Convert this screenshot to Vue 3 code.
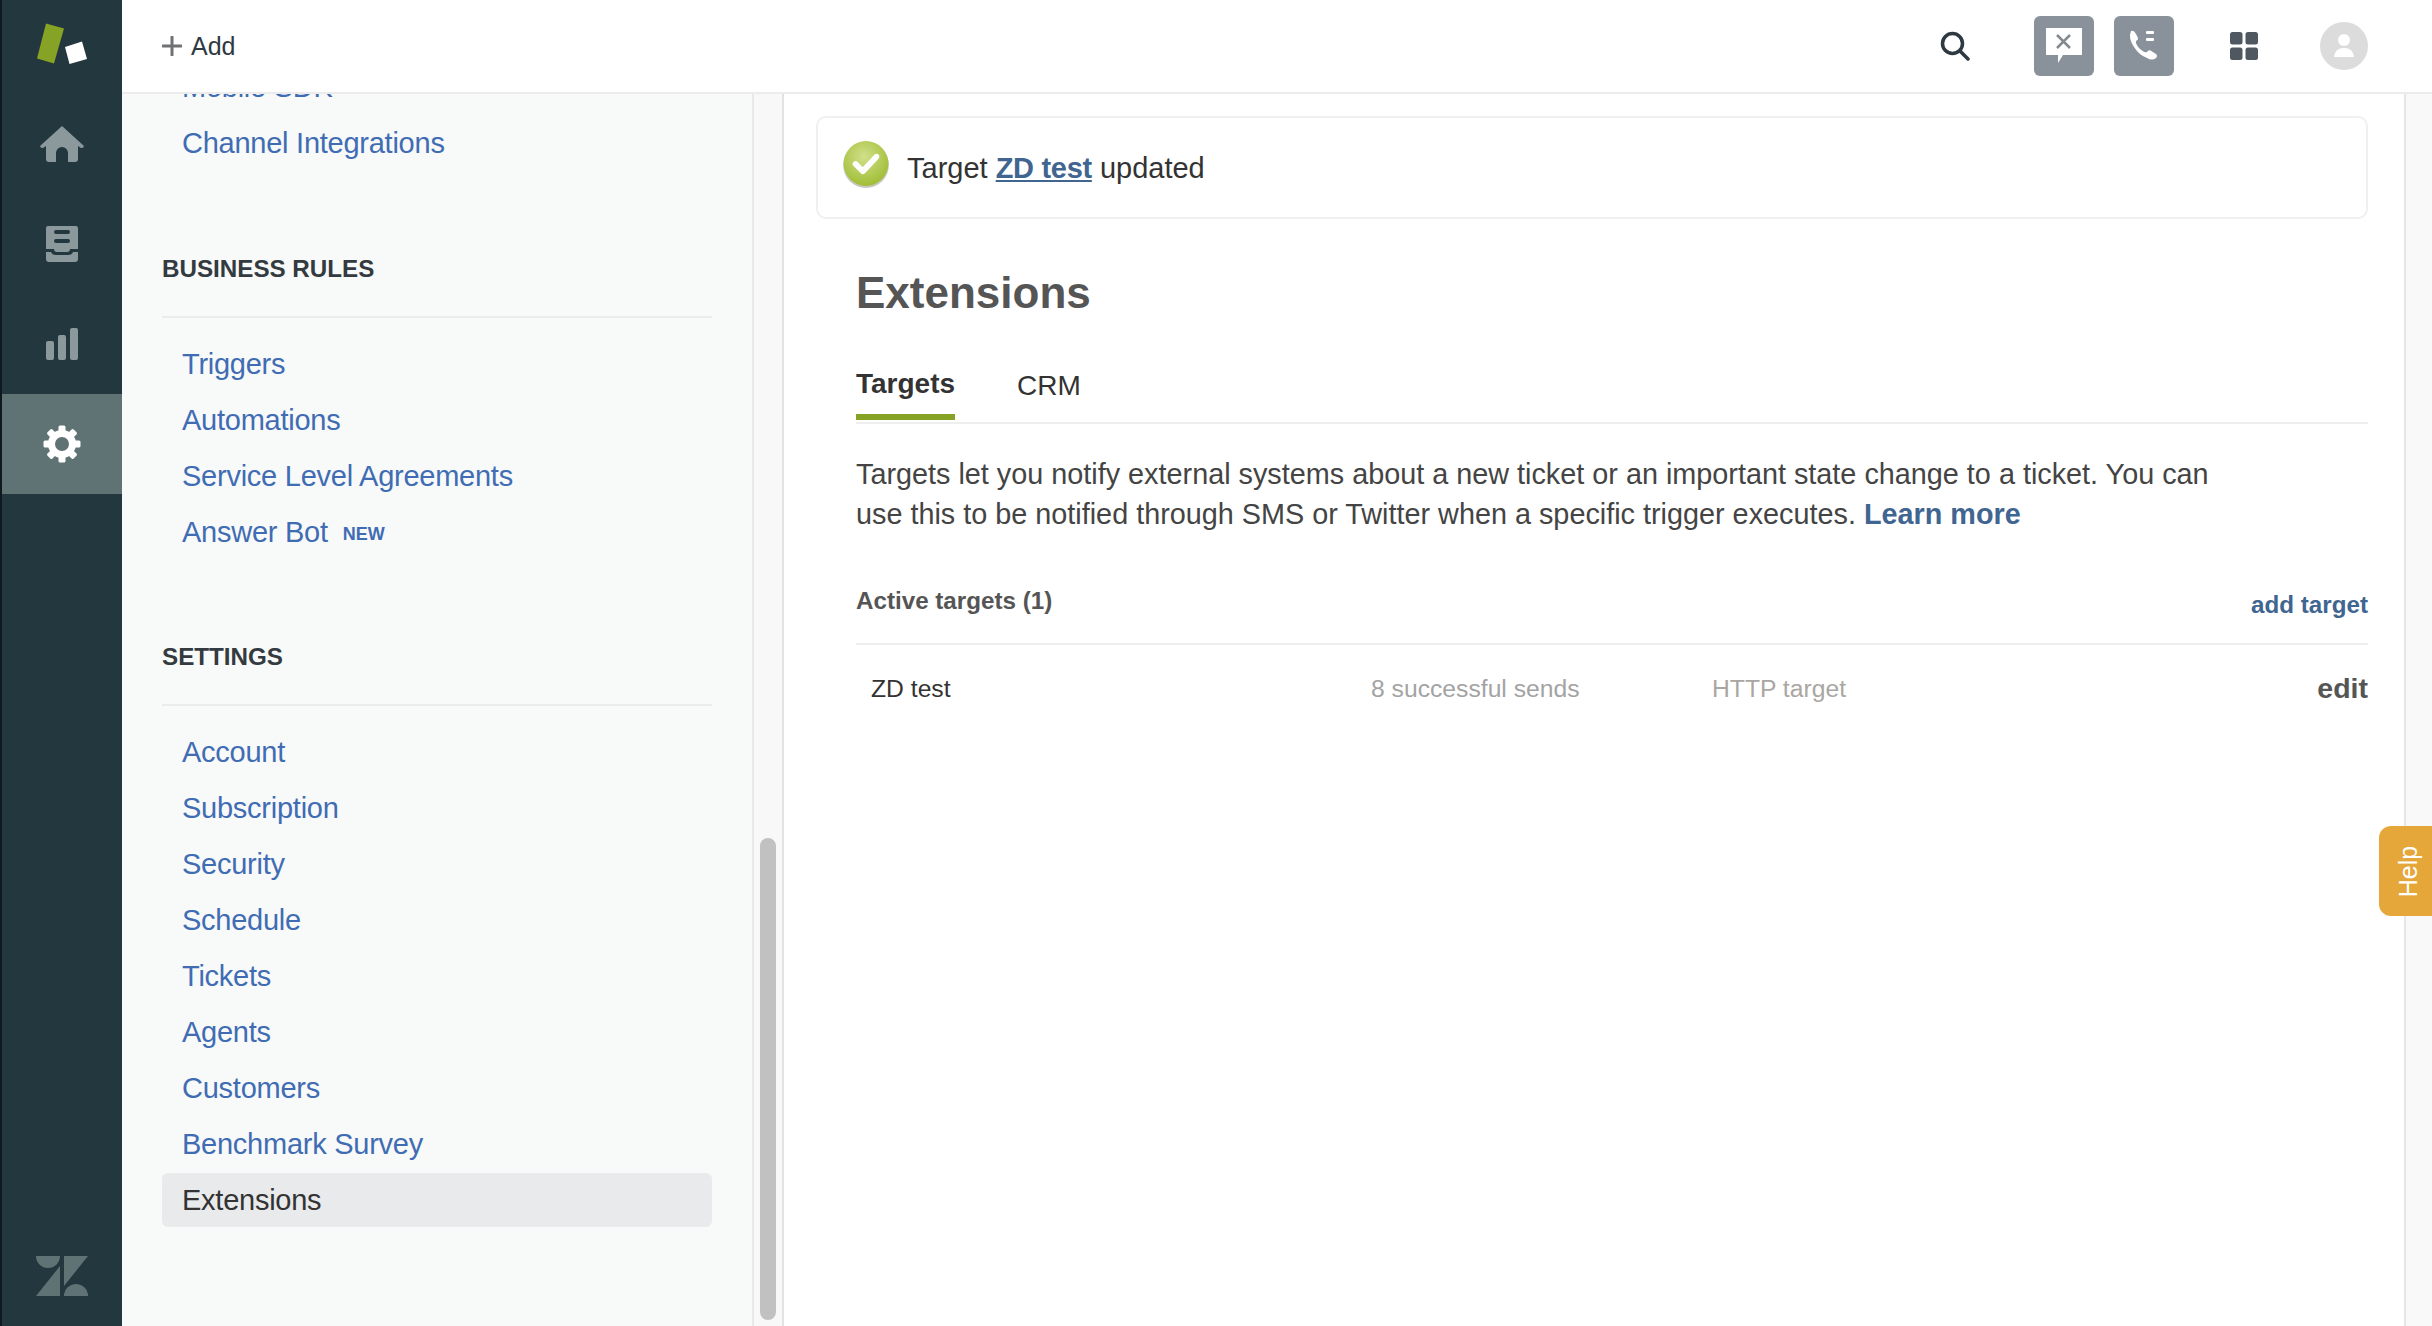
<template>
  <div class="page">
    <!-- left rail -->
    <nav class="rail">
      <div class="rail-logo">
        <svg width="122" height="92" viewBox="0 0 122 92">
          <polygon points="46,23.5 64,28.5 54,63.5 37,58.5" fill="#86a325" />
          <polygon points="65,47 82,41.5 87,59 69.5,64" fill="#ffffff" />
        </svg>
      </div>
      <div class="rail-item">
        <svg width="46" height="38" viewBox="0 0 46 38">
          <path fill="#8b989c" d="M23 1 L45 21 Q44.500 23.500 42 23 L39 21 V34 Q39 37 36 37 H29 V28 A6 6 0 0 0 17 28 V37 H10 Q7 37 7 34 V21 L4 23 Q1.500 23.500 1 21 Z" />
        </svg>
      </div>
      <div class="rail-item">
        <svg width="34" height="38" viewBox="0 0 34 38">
          <path fill="#8b989c" d="M3 1 H31 Q33 1 33 3 V24 H25 Q25 27 22 27 H12 Q9 27 9 24 H1 V3 Q1 1 3 1 Z" />
          <rect x="9" y="5" width="16" height="4" rx="2" fill="#23373e" />
          <rect x="9" y="14" width="16" height="4" rx="2" fill="#23373e" />
          <path fill="#8b989c" d="M1 27 H6 Q7 30 11 30 H23 Q27 30 28 27 H33 V34 Q33 37 30 37 H4 Q1 37 1 34 Z" />
        </svg>
      </div>
      <div class="rail-item">
        <svg width="34" height="34" viewBox="0 0 34 34">
          <rect x="1" y="14" width="8" height="19" rx="2" fill="#8b989c" />
          <rect x="13" y="8" width="8" height="25" rx="2" fill="#8b989c" />
          <rect x="25" y="1" width="8" height="32" rx="2" fill="#8b989c" />
        </svg>
      </div>
      <div class="rail-item active">
        <svg width="38" height="38" viewBox="0 0 38 38">
          <rect v-for="a in gearAngles" :key="a" x="15.500" y="0.500" width="7" height="8" rx="1.500" fill="#fff" :transform="`rotate(${a} 19 19)`" />
          <circle cx="19" cy="19" r="10.500" fill="none" stroke="#fff" stroke-width="7" />
        </svg>
      </div>
      <div class="rail-bottom">
        <svg width="52" height="40" viewBox="0 0 52 40">
          <g fill="#5f7274">
            <path d="M0 0 H24 A12 12 0 0 1 0 0 Z" />
            <path d="M0 40 L24 10 V40 Z" />
            <path d="M28 0 H52 L28 30 Z" />
            <path d="M28 40 A12 12 0 0 1 52 40 Z" />
          </g>
        </svg>
      </div>
    </nav>

    <div class="body">
      <!-- top bar -->
      <header class="topbar">
        <div class="add">
          <svg width="20" height="20" viewBox="0 0 20 20">
            <path d="M10 1 V19 M1 10 H19" stroke="#6f7173" stroke-width="3" stroke-linecap="round" />
          </svg>
          <span>Add</span>
        </div>
        <div class="top-icons">
          <svg class="search" width="30" height="30" viewBox="0 0 30 30">
            <circle cx="12.500" cy="12.500" r="10" fill="none" stroke="#2f3941" stroke-width="3.500" />
            <path d="M20 20 L28 28" stroke="#2f3941" stroke-width="3.500" stroke-linecap="round" />
          </svg>
          <div class="square">
            <svg width="38" height="38" viewBox="0 0 38 38">
              <path fill="#fff" d="M1 1 H37 V28 H18 L13 36 V28 H1 Z" />
              <path d="M12 8 L25 21 M25 8 L12 21" stroke="#84898f" stroke-width="2.500" />
            </svg>
          </div>
          <div class="square second">
            <svg width="32" height="32" viewBox="0 0 32 32">
              <path fill="#fff" d="M3 1 Q6 0 8 4 L10 8 Q10.500 10 8 11 Q7 13 11 18 Q16 23 19 22 Q20.500 19.500 22.500 20.500 L28 24 Q30 26 28 28 Q24 31 19 28 Q11 25 6 17 Q0 8 3 1 Z" />
              <rect x="18" y="1" width="8" height="3" rx="1" fill="#fff" />
              <rect x="18" y="8" width="8" height="3" rx="1" fill="#fff" />
            </svg>
          </div>
          <svg class="grid-icon" width="28" height="28" viewBox="0 0 28 28">
            <rect x="0" y="0" width="12.500" height="12.500" rx="2.500" fill="#4f5861" />
            <rect x="15.500" y="0" width="12.500" height="12.500" rx="2.500" fill="#4f5861" />
            <rect x="0" y="15.500" width="12.500" height="12.500" rx="2.500" fill="#4f5861" />
            <rect x="15.500" y="15.500" width="12.500" height="12.500" rx="2.500" fill="#4f5861" />
          </svg>
          <svg class="avatar" width="48" height="48" viewBox="0 0 48 48">
            <circle cx="24" cy="24" r="24" fill="#dcdcdc" />
            <circle cx="24" cy="18" r="6" fill="#fff" />
            <path d="M14 35 Q15 26 24 26 Q33 26 34 35 Z" fill="#fff" />
          </svg>
        </div>
      </header>

      <div class="columns">
        <!-- admin sidebar -->
        <aside class="side">
          <div class="side-scroll">
            <a class="side-link">Mobile SDK</a>
            <a class="side-link">Channel Integrations</a>
            <section v-for="group in groups" :key="group.title" class="group">
              <h3>{{ group.title }}</h3>
              <a
                v-for="item in group.items"
                :key="item.label"
                class="side-link"
                :class="{ current: item.current }"
              >
                <span>{{ item.label }}</span>
                <em v-if="item.isNew">NEW</em>
              </a>
            </section>
          </div>
        </aside>
        <div class="scrollbar"><div class="thumb"></div></div>

        <!-- main content -->
        <main class="main">
          <div class="notice">
            <svg width="50" height="50" viewBox="0 0 48 48">
              <defs>
                <radialGradient id="okFill" cx="45%" cy="35%" r="70%">
                  <stop offset="0%" stop-color="#d0e08a" />
                  <stop offset="100%" stop-color="#9dbb2f" />
                </radialGradient>
              </defs>
              <circle cx="24" cy="25" r="22" fill="#c8c8c0" />
              <circle cx="24" cy="23.500" r="21.500" fill="url(#okFill)" />
              <path d="M14 24 L21 31 L34 17" fill="none" stroke="#fff" stroke-width="5.500" stroke-linecap="round" stroke-linejoin="round" />
            </svg>
            <p>Target <a>ZD test</a> updated</p>
          </div>

          <h1>Extensions</h1>

          <div class="tabs">
            <span class="tab on">Targets</span>
            <span class="tab">CRM</span>
          </div>

          <p class="intro">
            Targets let you notify external systems about a new ticket or an important state change to a ticket. You can
            use this to be notified through SMS or Twitter when a specific trigger executes. <a>Learn more</a>
          </p>

          <div class="list-head">
            <strong>Active targets (1)</strong>
            <a>add target</a>
          </div>
          <div class="row">
            <span class="name">ZD test</span>
            <span class="sends">8 successful sends</span>
            <span class="kind">HTTP target</span>
            <a class="edit">edit</a>
          </div>
        </main>

        <div class="strip"></div>
      </div>
    </div>

    <div class="help"><span>Help</span></div>
  </div>
</template>

<script setup>
const gearAngles = [0, 45, 90, 135, 180, 225, 270, 315]

const groups = [
  {
    title: 'BUSINESS RULES',
    items: [
      { label: 'Triggers' },
      { label: 'Automations' },
      { label: 'Service Level Agreements' },
      { label: 'Answer Bot', isNew: true }
    ]
  },
  {
    title: 'SETTINGS',
    items: [
      { label: 'Account' },
      { label: 'Subscription' },
      { label: 'Security' },
      { label: 'Schedule' },
      { label: 'Tickets' },
      { label: 'Agents' },
      { label: 'Customers' },
      { label: 'Benchmark Survey' },
      { label: 'Extensions', current: true }
    ]
  }
]
</script>

<style>
html,
body {
  margin: 0;
  overflow: hidden;
}
</style>

<style scoped>
.page {
  display: flex;
  height: 1326px;
  overflow: hidden;
  position: relative;
  font-family: "Liberation Sans", Arial, sans-serif;
  color: #333;
}

.rail {
  width: 120px;
  border-left: 2px solid #10191f;
  background: #23373e;
  display: flex;
  flex-direction: column;
  flex-shrink: 0;
}

.rail-logo {
  height: 94px;
  margin-left: -2px;
}

.rail-logo svg {
  display: block;
}

.rail-item {
  height: 100px;
  display: flex;
  align-items: center;
  justify-content: center;
}

.rail-item.active {
  background: #5f7274;
}

.rail-bottom {
  margin-top: auto;
  padding: 0 0 30px 34px;
  line-height: 0;
}

.body {
  flex: 1;
  display: flex;
  flex-direction: column;
  min-width: 0;
}

.topbar {
  height: 92px;
  border-bottom: 2px solid #ececec;
  background: #fff;
  display: flex;
  align-items: center;
  justify-content: space-between;
  padding: 0 64px 0 40px;
  flex-shrink: 0;
}

.add {
  display: flex;
  align-items: center;
  gap: 9px;
  font-size: 25px;
  color: #2f3941;
}

.top-icons {
  display: flex;
  align-items: center;
}

.search {
  margin-right: 64px;
}

.square {
  width: 60px;
  height: 60px;
  border-radius: 6px;
  background: #89919a;
  display: flex;
  align-items: center;
  justify-content: center;
}

.square.second {
  margin-left: 20px;
}

.grid-icon {
  margin-left: 56px;
}

.avatar {
  margin-left: 62px;
}

.columns {
  flex: 1;
  display: flex;
  min-height: 0;
}

.side {
  width: 630px;
  background: #f8f9f9;
  border-right: 2px solid #e8e9ea;
  overflow: hidden;
  flex-shrink: 0;
}

.side-scroll {
  margin-top: -34px;
  padding: 0 40px;
}

.side-link {
  display: flex;
  align-items: center;
  height: 54px;
  margin: 0 0 2px;
  padding-left: 20px;
  font-size: 29px;
  letter-spacing: -0.25px;
  color: #3f6cb3;
  border-radius: 6px;
}

.side-link.current {
  background: #e9eaec;
  color: #333;
}

.side-link em {
  font-style: normal;
  font-weight: 700;
  font-size: 18px;
  letter-spacing: 0;
  margin-left: 15px;
  margin-top: 4px;
  color: #3f6cb3;
}

.group {
  padding-top: 82px;
}

.group + .group {
  padding-top: 81px;
}

.group h3 {
  margin: 0 0 19px;
  height: 30px;
  padding-bottom: 32px;
  border-bottom: 2px solid #ececec;
  line-height: 30px;
  font-size: 24.200px;
  font-weight: 700;
  color: #333a40;
}

.scrollbar {
  width: 30px;
  background: #f8f8f8;
  border-right: 2px solid #e0e2e4;
  padding: 744px 0 6px 6px;
  box-sizing: border-box;
  flex-shrink: 0;
}

.thumb {
  width: 16px;
  height: 100%;
  border-radius: 8px;
  background: #c1c1c1;
}

.main {
  flex: 1;
  min-width: 0;
  padding: 22px 36px 0 32px;
  background: #fff;
}

.notice {
  height: 78px;
  border: 2px solid #f0f0f0;
  border-radius: 10px;
  display: flex;
  align-items: flex-start;
  gap: 16px;
  padding: 21px 0 0 23px;
}

.notice svg {
  flex-shrink: 0;
}

.notice p {
  margin: 11px 0 0;
  font-size: 29px;
  line-height: 36px;
  color: #333;
}

.notice a {
  color: #3f6590;
  font-weight: 700;
  letter-spacing: -0.3px;
  text-decoration: underline;
}

h1 {
  margin: 46px 0 0 40px;
  font-size: 44px;
  line-height: 56px;
  font-weight: 700;
  color: #555;
}

.tabs {
  margin: 39px 0 0 40px;
  height: 62px;
  border-bottom: 2px solid #eee;
  display: flex;
  gap: 62px;
}

.tab {
  font-size: 28px;
  line-height: 36px;
  padding-top: 8px;
  height: 54px;
  box-sizing: border-box;
  color: #333;
}

.tab.on {
  height: 60px;
  font-weight: 700;
  padding-top: 6px;
  border-bottom: 6px solid #86a325;
}

.intro {
  margin: 30px 0 0 40px;
  width: 1400px;
  font-size: 28.800px;
  line-height: 40px;
  color: #444;
}

.intro a {
  font-weight: 700;
  color: #3f6590;
}

.list-head {
  margin: 52px 0 0 40px;
  height: 57px;
  border-bottom: 2px solid #eee;
  display: flex;
  justify-content: space-between;
  font-size: 24.200px;
}

.list-head strong {
  line-height: 30px;
  color: #555;
}

.list-head a {
  line-height: 30px;
  margin-top: 4px;
  font-weight: 700;
  color: #3f6590;
}

.row {
  margin-left: 40px;
  padding-left: 15px;
  height: 87px;
  display: flex;
  align-items: center;
  font-size: 24.700px;
}

.name {
  width: 500px;
  color: #333;
}

.sends {
  width: 341px;
  color: #a3a3a3;
}

.kind {
  color: #aaa6a2;
}

.edit {
  margin-left: auto;
  font-size: 28.500px;
  font-weight: 700;
  color: #555;
}

.strip {
  width: 26px;
  background: #f9f9f9;
  border-left: 2px solid #e6e6e6;
  flex-shrink: 0;
}

.help {
  position: absolute;
  right: 0;
  top: 826px;
  width: 53px;
  height: 90px;
  padding-left: 6px;
  box-sizing: border-box;
  border-radius: 12px 0 0 12px;
  background: #e6a73a;
  display: flex;
  align-items: center;
  justify-content: center;
}

.help span {
  transform: rotate(-90deg);
  color: #fff;
  font-size: 25px;
}
</style>
